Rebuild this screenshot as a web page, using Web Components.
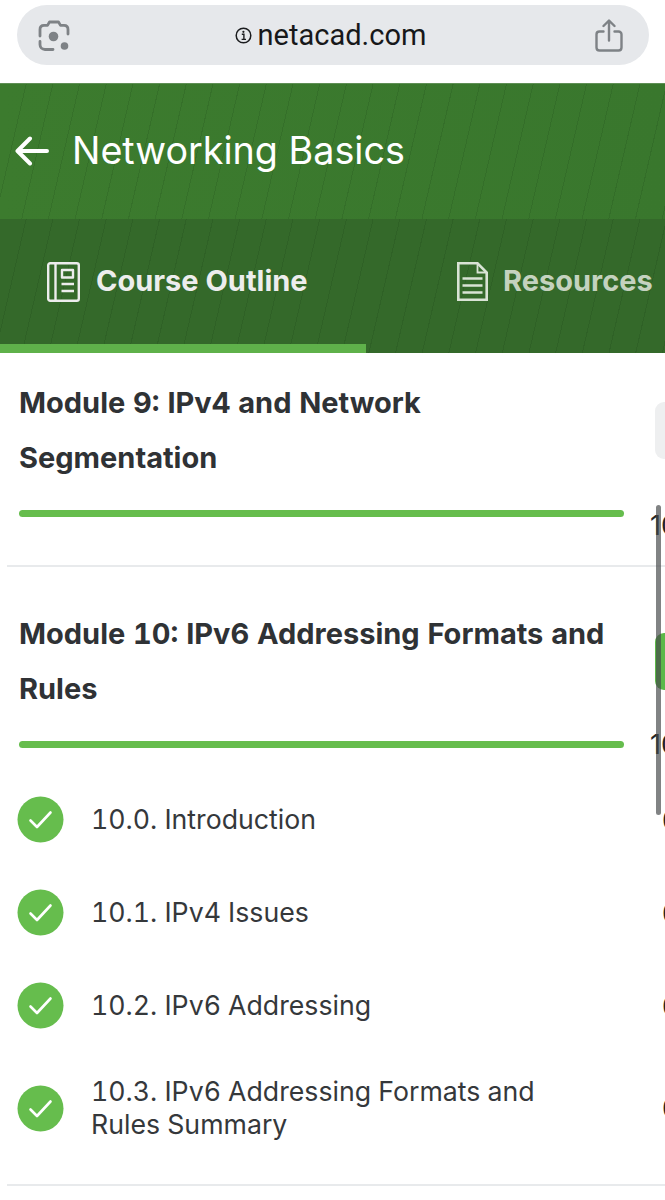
<!DOCTYPE html>
<html lang="en">
<head>
<meta charset="utf-8">
<title>Networking Basics</title>
<style>
html,body{margin:0;padding:0;background:#fff;height:1200px;overflow:hidden;font-family:Inter,"Liberation Sans",sans-serif;color:#2f3235}
course-page{width:665px;height:1200px}
</style>
</head>
<body>
<course-page>
  <browser-bar slot="bar" domain="netacad.com"></browser-bar>
  <course-header title-text="Networking Basics"></course-header>
  <module-section percent="100%" action="idle" first>
    <span slot="title">Module 9: IPv4 and Network Segmentation</span>
  </module-section>
  <module-section percent="100%" action="active">
    <span slot="title">Module 10: IPv6 Addressing Formats and Rules</span>
    <lesson-row>10.0. Introduction</lesson-row>
    <lesson-row>10.1. IPv4 Issues</lesson-row>
    <lesson-row>10.2. IPv6 Addressing</lesson-row>
    <lesson-row>10.3. IPv6 Addressing Formats and Rules Summary</lesson-row>
  </module-section>
</course-page>
<script>
function def(name, css, html){
  customElements.define(name, class extends HTMLElement{
    connectedCallback(){
      if(this.shadowRoot) return;
      const r=this.attachShadow({mode:'open'});
      r.innerHTML='<style>'+css+'</style>'+(typeof html==='function'?html(this):html);
    }
  });
}
def('course-page',`
  :host{display:block;position:relative;overflow:hidden;background:#fff}
  .thumb{position:absolute;left:656px;top:505px;width:5px;height:310px;border-radius:3px;background:rgba(70,72,74,.68)}
`,`<slot name="bar"></slot><slot></slot><div class="thumb"></div>`);

def('browser-bar',`
  :host{display:block;height:83px;box-sizing:border-box;padding:5px 16px 0 17px;background:#fff}
  .pill{height:60px;border-radius:30px;background:#e6e8eb;display:grid;grid-template-columns:1fr auto 1fr;align-items:center;padding:0 26px 0 21px}
  .url{display:flex;align-items:center;gap:6px;font:400 29px/1 Roboto,Inter,sans-serif;color:#17181a}
  .left{justify-self:start;display:flex}.right{justify-self:end;display:flex}
  svg{display:block}
`,h=>`<div class="pill">
  <div class="left"><svg width="32" height="32" viewBox="0 0 32 32" fill="none" stroke="#7e8286" stroke-width="2.8" stroke-linecap="round" stroke-linejoin="round">
    <path d="M2 17V10.5C2 8 3.6 6.4 6 6.4H9.5L11.5 3H20.5L22.5 6.4H26C28.4 6.4 30 8 30 10.5V15"/>
    <path d="M2 22.5V25.5C2 28.500 4 30.500 7 30.500H15"/>
    <circle cx="15.5" cy="17.5" r="4.8" fill="#7e8286" stroke="none"/>
    <circle cx="26.5" cy="27" r="3.8" fill="#7e8286" stroke="none"/>
  </svg></div>
  <div class="url"><svg width="17" height="17" viewBox="0 0 17 17" fill="none" stroke="#1b1c1e"><circle cx="8.5" cy="8.5" r="7.3" stroke-width="1.5"/><path d="M6.8 7.3H8.9V12.3M6.6 12.4H11" stroke-width="1.4"/><circle cx="8.4" cy="4.8" r="1.1" fill="#1b1c1e" stroke="none"/></svg><span>${h.getAttribute('domain')}</span></div>
  <div class="right"><svg width="28" height="33" viewBox="0 0 28 33" fill="none" stroke="#7e8286" stroke-width="2.4" stroke-linecap="round" stroke-linejoin="round">
    <path d="M8.5 12.5H4.5C2.8 12.5 1.5 13.8 1.5 15.5V28.5C1.5 30.2 2.8 31.5 4.5 31.5H23.5C25.2 31.5 26.5 30.2 26.5 28.5V15.5C26.5 13.8 25.2 12.5 23.5 12.5H19.5"/>
    <path d="M14 21.5V2M8.5 7L14 1.5L19.5 7"/>
  </svg></div>
</div>`);

const stripes=`repeating-linear-gradient(103deg,rgba(0,0,0,0) 0 25px,rgba(10,40,10,.12) 25px 26px)`;
def('course-header',`
  :host{display:block;color:#fff}
  .top{height:136px;display:flex;align-items:center;gap:24px;padding:0 0 2px 15px;box-sizing:border-box;
    background:${stripes},linear-gradient(90deg,#3c7b2e,#39772d);border-top:1px solid #5f8f55}
  h1{margin:0;font:400 37.7px/1 Inter,sans-serif;margin-left:-1px}
  nav{background:${stripes},#34692a}
  .tabs{display:flex;height:125px;align-items:center}
  .tab{display:flex;align-items:center;box-sizing:border-box;width:365px;flex:none;font:700 29px/1 Inter,sans-serif;white-space:nowrap}
  .tab span{position:relative;top:-1px}
  .a{padding-left:47px;gap:16px;color:#ededed}
  .b{padding-left:92px;gap:15px;color:#c4d2bf}
  .ind{height:9px;width:366px;background:#5fb14a}
  svg{display:block;flex:none}
`,h=>`<div class="top">
  <svg width="34" height="30" viewBox="0 0 34 30" fill="none" stroke="#fff" stroke-width="4" stroke-linecap="round" stroke-linejoin="round"><path d="M32 15H3M15 2.5L2.5 15L15 27.5"/></svg>
  <h1>${h.getAttribute('title-text')}</h1>
</div>
<nav>
  <div class="tabs">
    <div class="tab a"><svg width="33" height="40" viewBox="0 0 33 40" fill="none" stroke="#ededed" stroke-width="2.4" stroke-linejoin="round"><rect x="1.2" y="1.2" width="30.6" height="37.6" rx="2"/><path d="M8.5 1.5V38.5"/><rect x="15" y="8" width="11" height="7.5"/><path d="M14.5 22H27M14.5 29H27" stroke-width="2.6"/></svg><span>Course Outline</span></div>
    <div class="tab b"><svg width="31" height="39" viewBox="0 0 31 39" fill="none" stroke="#d9e3d5" stroke-width="2.6"><path d="M1.3 1.3H20.5L29.7 10.5V37.7H1.3Z"/><path d="M20.5 1.3V10.5H29.7" stroke-width="1.8"/><path d="M5.5 16.5H25.5M5.5 23.5H25.5M5.500 30.5H25.5"/></svg><span>Resources</span></div>
  </div>
  <div class="ind"></div>
</nav>`);

def('module-section',`
  :host{display:block;padding-top:40px;border-bottom:2px solid #e8eaec;margin-left:7px;box-sizing:border-box;width:658px}
  :host([first]){padding-top:23px}
  .head{display:grid;grid-template-columns:605px auto;column-gap:26px;padding-left:12px;align-items:center}
  .title{font:700 29px/54.5px Inter,sans-serif;font-feature-settings:"tnum";color:#2f3235;max-width:600px}
  .btn{justify-self:start;width:40px;height:57px;margin-left:5px;border-radius:9px 0 0 9px;background:#eeeff0}
  .active{background:#5cb848}
  .bar{height:7px;border-radius:4px;background:#66bd4d;margin:25px 0 25px}
  .pct{font:400 27px/7px Inter,sans-serif;color:#232527;white-space:nowrap;width:20px}
  .list{margin-left:-7px}
  ::slotted(lesson-row:last-child){margin-bottom:20px}
  :host([first]) .bar{margin-bottom:48px}
`,h=>`<div class="head">
  <div class="title"><slot name="title"></slot></div>
  <div class="btn ${h.getAttribute('action')==='active'?'active':''}"></div>
  <div class="bar"></div>
  <div class="pct">${h.getAttribute('percent')}</div>
</div>
<div class="list"><slot></slot></div>`);

def('lesson-row',`
  :host{display:block;padding:23px 0}
  .row{display:flex;align-items:center;padding-left:17px;position:relative;width:690px}
  .ic{flex:none;width:47px;height:47px;margin-right:27px}
  .txt{width:470px;font:400 26.7px/33px Inter,sans-serif;font-feature-settings:"tnum";color:#35383b;min-height:47px;display:flex;align-items:center}
  .z{position:absolute;left:662px;top:50%;transform:translateY(-50%);font:400 27px/1 Inter,sans-serif;color:#232527}
  svg{display:block}
`,`<div class="row">
  <svg class="ic" viewBox="0 0 47 47"><circle cx="23.5" cy="23.5" r="23" fill="#66bd4d"/><path d="M13.5 24.5L20 31L33.5 16.5" fill="none" stroke="#fff" stroke-width="2.6" stroke-linecap="round" stroke-linejoin="round"/></svg>
  <div class="txt"><span><slot></slot></span></div>
  <div class="z">0</div>
</div>`);
</script>
</body>
</html>
